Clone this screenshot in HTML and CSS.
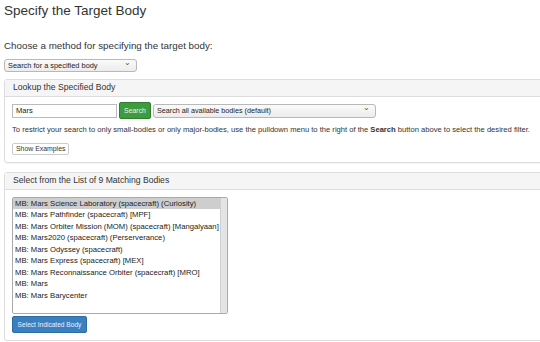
FILE: index.html
```html
<!DOCTYPE html>
<html lang="en">
<head>
  <meta charset="UTF-8">
  <title>Specify the Target Body</title>
  <link rel="stylesheet" href="styles.css">
</head>
<body>
  <div class="page">
    <h2>Specify the Target Body</h2>

    <label class="method-label">Choose a method for specifying the target body:</label>
    <div class="select method-select">Search for a specified body <span class="caret">&#8964;</span></div>

    <div class="panel">
      <div class="panel-heading">Lookup the Specified Body</div>
      <div class="panel-body">
        <div class="search-row">
          <div class="input">Mars</div>
          <button class="btn btn-success">Search</button>
          <div class="select filter-select">Search all available bodies (default) <span class="caret">&#8964;</span></div>
        </div>
        <p class="help">To restrict your search to only small-bodies or only major-bodies, use the pulldown menu to the right of the <strong>Search</strong> button above to select the desired filter.</p>
        <button class="btn btn-default">Show Examples</button>
      </div>
    </div>

    <div class="panel">
      <div class="panel-heading">Select from the List of 9 Matching Bodies</div>
      <div class="panel-body">
        <div class="listbox">
          <div class="options">
            <div class="option selected">MB: Mars Science Laboratory (spacecraft) (Curiosity)</div>
            <div class="option">MB: Mars Pathfinder (spacecraft) [MPF]</div>
            <div class="option">MB: Mars Orbiter Mission (MOM) (spacecraft) [Mangalyaan]</div>
            <div class="option">MB: Mars2020 (spacecraft) (Perserverance)</div>
            <div class="option">MB: Mars Odyssey (spacecraft)</div>
            <div class="option">MB: Mars Express (spacecraft) [MEX]</div>
            <div class="option">MB: Mars Reconnaissance Orbiter (spacecraft) [MRO]</div>
            <div class="option">MB: Mars</div>
            <div class="option">MB: Mars Barycenter</div>
          </div>
          <div class="scroll-track"></div>
        </div>
        <button class="btn btn-primary">Select Indicated Body</button>
      </div>
    </div>
  </div>
</body>
</html>
```

FILE: styles.css
```css
body {
  font-family: "Liberation Sans", Arial, sans-serif;
  color: #333;
  margin: 0;
  padding: 0;
  background: #fff;
  overflow: hidden;
}

.page {
  padding: 0 0 0 4px;
}

h2 {
  font-size: 13.5px;
  font-weight: normal;
  margin: 0;
  padding-top: 3px;
  line-height: 16px;
}

.method-label {
  display: block;
  margin-top: 21px;
  font-size: 9.8px;
  line-height: 12px;
}

.select {
  position: relative;
  box-sizing: border-box;
  border: 1px solid #b8b8b8;
  border-radius: 3px;
  background: linear-gradient(#fafafa, #ececec);
  font-size: 7.4px;
  color: #222;
  padding: 0 14px 0 3px;
  white-space: nowrap;
}

.caret {
  position: absolute;
  right: 5px;
  top: -3px;
  font-size: 8px;
  color: #555;
}

.method-select {
  width: 133px;
  height: 13px;
  line-height: 11px;
  margin-top: 7px;
}

.panel {
  border: 1px solid #ddd;
  border-radius: 3px;
  margin-right: -12px;
  margin-top: 7px;
  box-shadow: 0 1px 1px rgba(0, 0, 0, 0.05);
}

.panel + .panel {
  margin-top: 9px;
}

.panel-heading {
  background: #f5f5f5;
  border-bottom: 1px solid #ddd;
  font-size: 8.6px;
  line-height: 14px;
  padding: 0 8px 2px 8px;
}

.panel-body {
  padding: 5px 7px 7px 7px;
}

.search-row {
  display: flex;
  align-items: center;
  gap: 2px;
}

.input {
  box-sizing: border-box;
  width: 105px;
  height: 14px;
  border: 1px solid #bbb;
  font-size: 7.6px;
  line-height: 12px;
  padding-left: 3px;
  color: #222;
}

.btn {
  font-family: inherit;
  border-radius: 2px;
  cursor: pointer;
  padding: 0 5px;
  font-size: 6.9px;
}

.btn-success {
  height: 17px;
  width: 32px;
  padding: 0;
  background: #3f9b3f;
  border: 1px solid #2f7d2f;
  color: #e6f5e6;
}

.filter-select {
  width: 223px;
  height: 14px;
  line-height: 12px;
  margin-left: 0;
  font-size: 7.2px;
}

.help {
  margin: 6px 0 2px 0;
  font-size: 7.6px;
  line-height: 10px;
  white-space: nowrap;
}

.btn-default {
  height: 12px;
  background: #fff;
  border: 1px solid #ccc;
  color: #333;
  padding: 0 3px;
}

.listbox {
  display: flex;
  width: 216px;
  height: 117px;
  box-sizing: border-box;
  border: 1px solid #aaa;
  border-radius: 2px;
  margin-top: 2px;
}

.options {
  flex: 1;
  min-width: 0;
  overflow: hidden;
}

.option {
  font-size: 7.7px;
  line-height: 11.45px;
  padding-left: 2px;
  white-space: nowrap;
  color: #222;
}

.option.selected {
  background: #cecece;
}

.scroll-track {
  width: 6px;
  background: #e4e4e4;
  border-left: 1px solid #d0d0d0;
}

.btn-primary {
  display: block;
  margin-top: 2px;
  height: 17px;
  width: 75px;
  padding: 0;
  background: #3a7fc0;
  border: 1px solid #2e6da4;
  color: #e8f0fa;
  font-size: 6.6px;
}
```
